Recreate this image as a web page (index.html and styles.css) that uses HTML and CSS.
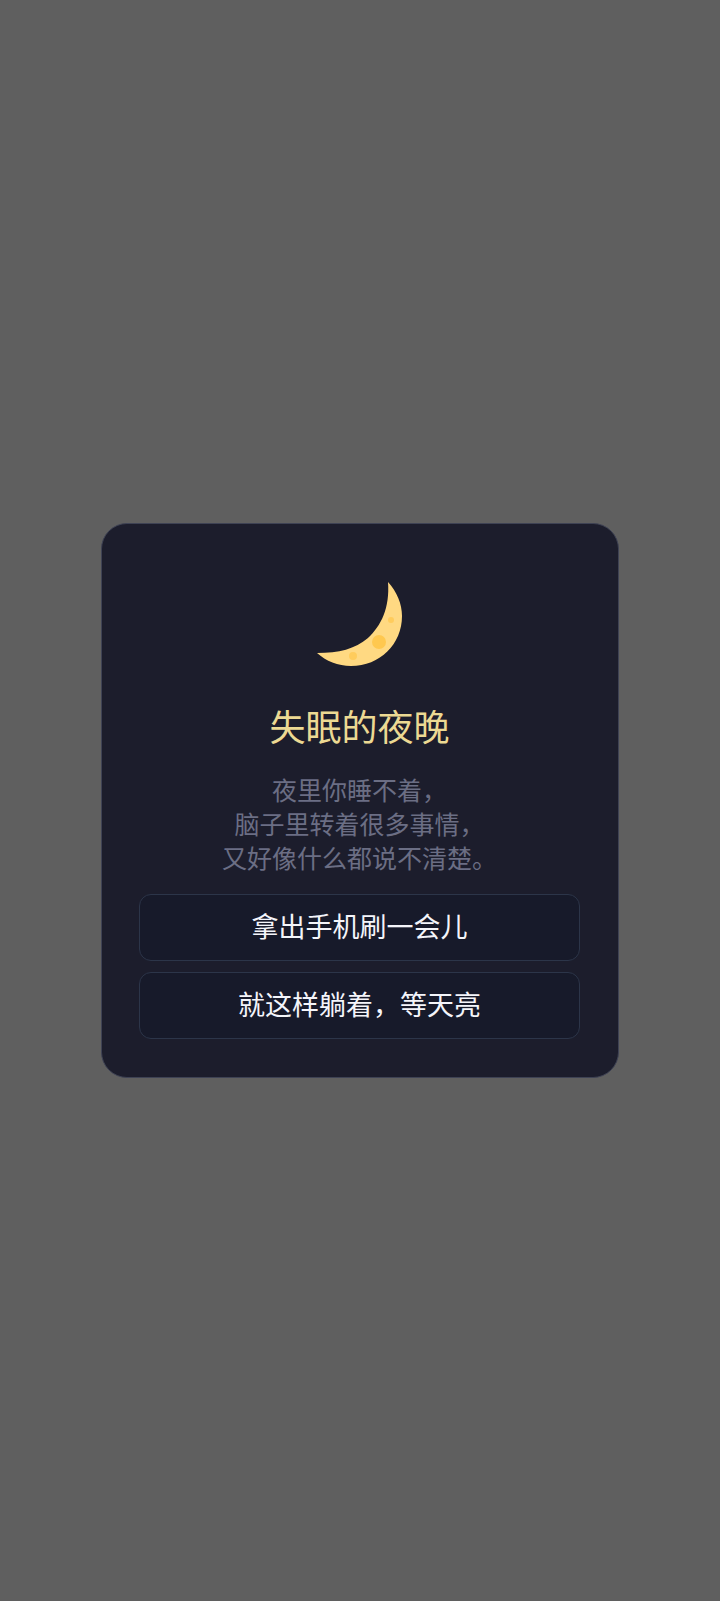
FILE: index.html
```
<!DOCTYPE html>
<html lang="zh-CN">

<head>
    <meta charset="UTF-8">
    <meta name="viewport" content="width=device-width, initial-scale=1.0">
    <title>失眠的夜晚</title>
    <link rel="stylesheet" href="styles.css">
</head>

<body>
    <main class="card">
        <svg class="moon" viewBox="15 10 90 88" aria-hidden="true">
            <path d="M89 12 C98 22 103 34 103 46 C103 74 81 96 52 96 C39 96 27 91 18 83 C40 83 56 79 69 68 C82 56 91 38 89 12 Z" fill="#ffd982" />
            <circle cx="80" cy="72" r="7" fill="#ffc84f" />
            <circle cx="54" cy="86" r="4" fill="#ffcc5c" />
            <circle cx="92" cy="50" r="3" fill="#ffcc5c" />
        </svg>
        <h1 class="title">失眠的夜晚</h1>
        <p class="story">夜里你睡不着，<br>脑子里转着很多事情，<br>又好像什么都说不清楚。</p>
        <div class="choices">
            <button type="button" class="choice">拿出手机刷一会儿</button>
            <button type="button" class="choice">就这样躺着，等天亮</button>
        </div>
    </main>
</body>

</html>
```
FILE: styles.css
```
* {
    box-sizing: border-box;
}

body {
    margin: 0;
    min-height: 100vh;
    display: flex;
    align-items: center;
    justify-content: center;
    background-color: #5f5f5f;
    font-family: "Noto Sans CJK SC", sans-serif;
}

.card {
    width: 72%;
    padding: 56px 38px 38px 37px;
    background-color: #1c1d2c;
    border: 1px solid #3e4254;
    border-radius: 26px;
    text-align: center;
}

.moon {
    display: block;
    width: 90px;
    height: 88px;
    margin: 0 auto 32px;
}

.title {
    margin: 0 0 22px;
    color: #ecd993;
    font-size: 36px;
    font-weight: 400;
    line-height: 50px;
}

.story {
    margin: 0 0 20px;
    color: #6b6e84;
    font-size: 25px;
    line-height: 34px;
}

.choices {
    display: flex;
    flex-direction: column;
    gap: 11px;
}

.choice {
    width: 100%;
    height: 67px;
    padding: 0 16px 4px;
    background-color: #171a2a;
    border: 1px solid #2c3549;
    border-radius: 12px;
    color: #f4f5fa;
    font-family: inherit;
    font-size: 27px;
    cursor: pointer;
}

.choice:hover {
    background-color: #20233a;
}
```
